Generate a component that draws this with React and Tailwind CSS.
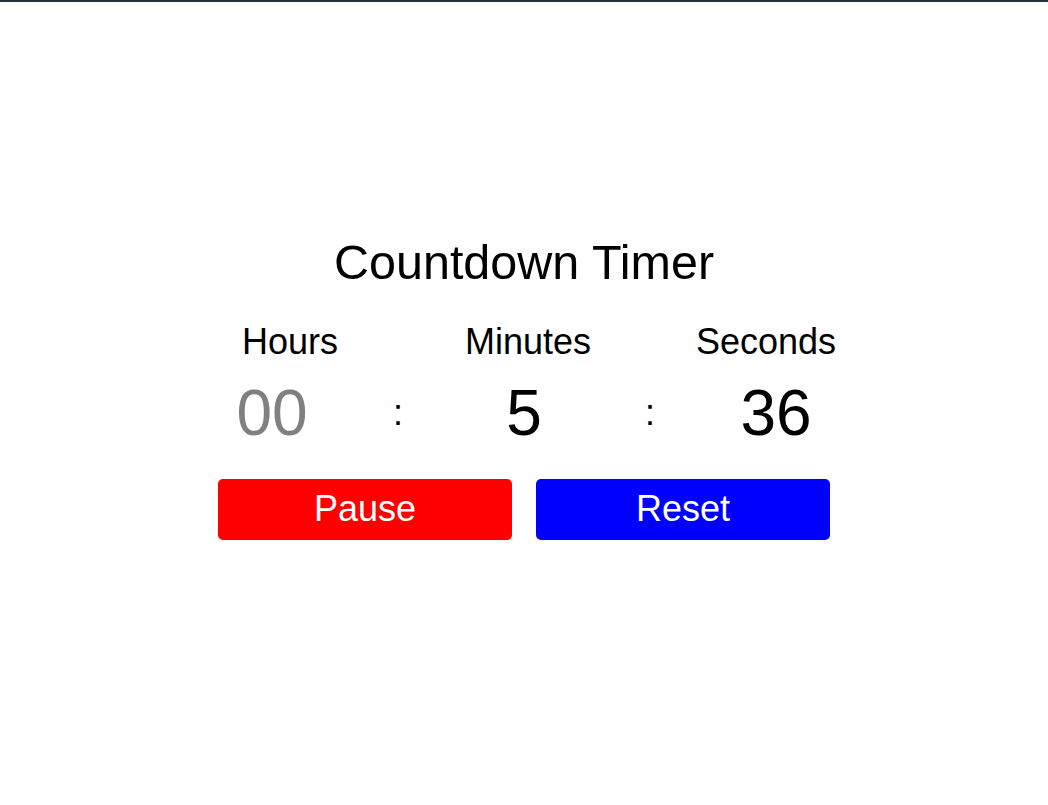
export default function App() {
  return (
    <div
      className="min-h-screen bg-white text-black"
      style={{ fontFamily: '"Liberation Sans", Arial, sans-serif' }}
    >
      <div className="h-[2px] bg-[#263238]" />
      <div className="flex flex-col items-center pt-[236px]">
        <h1 className="text-[48.5px] leading-none font-normal">Countdown Timer</h1>
        <div className="mt-[37px] grid w-[722px] grid-cols-3 pl-[8px] text-center text-[36px] leading-none">
          <div>Hours</div>
          <div>Minutes</div>
          <div>Seconds</div>
        </div>
        <div className="mt-[21px] grid w-[630px] grid-cols-5 items-center text-center">
          <div className="text-[64px] leading-none text-[#808080]">00</div>
          <div className="text-[36px] leading-none">:</div>
          <div className="text-[64px] leading-none">5</div>
          <div className="text-[36px] leading-none">:</div>
          <div className="text-[64px] leading-none">36</div>
        </div>
        <div className="mt-[34px] flex gap-6">
          <button className="flex h-[61px] w-[294px] items-center justify-center rounded-[5px] bg-[#ff0000] text-[36px] leading-none text-white">
            Pause
          </button>
          <button className="flex h-[61px] w-[294px] items-center justify-center rounded-[5px] bg-[#0000ff] text-[36px] leading-none text-white">
            Reset
          </button>
        </div>
      </div>
    </div>
  );
}
